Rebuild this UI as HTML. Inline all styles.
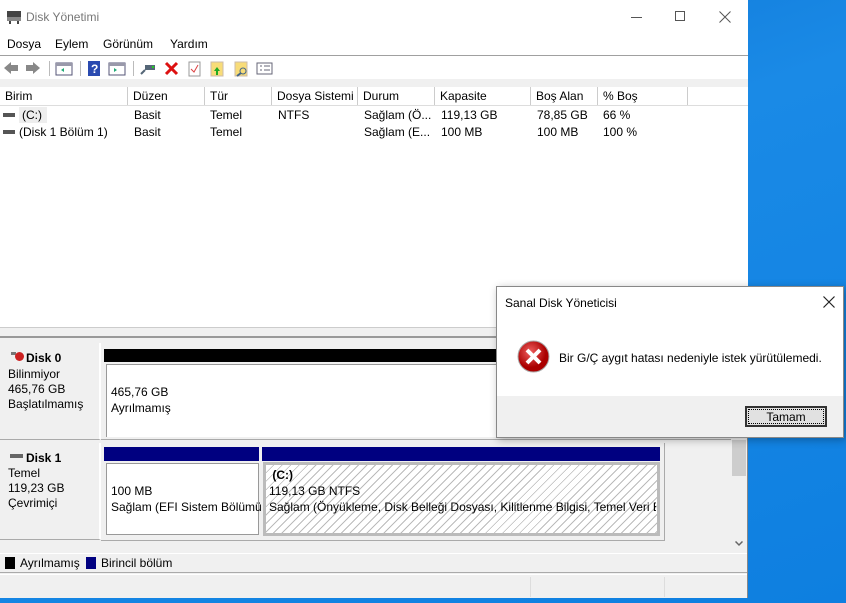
<!DOCTYPE html>
<html><head><meta charset="utf-8"><style>
*{margin:0;padding:0;box-sizing:border-box}
body{width:846px;height:603px;overflow:hidden;position:relative;font-family:"Liberation Sans","DejaVu Sans",sans-serif;font-size:12px;color:#000;background:linear-gradient(160deg,#0a6fd0 0%,#1a8ae6 40%,#0e7fe0 100%)}
.a{position:absolute}
.win{left:0;top:0;width:748px;height:598px;background:#f0f0f0;border-right:1px solid #888}
.t{white-space:nowrap}
.hdr div{position:absolute;top:0;height:18px;border-right:1px solid #ccc;padding:2px 0 0 5px;background:#fff}
</style></head><body>
<div class="a win">
 <div class="a" style="left:0;top:0;width:748px;height:33px;background:#fff"></div>
 <svg class="a" style="left:6px;top:10px" width="16" height="14"><rect x="1" y="1" width="14" height="6" fill="#444"/><rect x="1" y="7" width="14" height="4" fill="#888"/><rect x="3" y="11" width="2" height="3" fill="#444"/><rect x="11" y="11" width="2" height="3" fill="#444"/></svg>
 <div class="a t" style="left:26px;top:10px;color:#777;font-size:12px">Disk Yönetimi</div>
 <div class="a" style="left:631px;top:17px;width:11px;height:1px;background:#555"></div>
 <div class="a" style="left:675px;top:11px;width:10px;height:10px;border:1px solid #555"></div>
 <svg class="a" style="left:719px;top:11px" width="12" height="12"><path d="M0.5 0.5 L11.5 11.5 M11.5 0.5 L0.5 11.5" stroke="#555" stroke-width="1"/></svg>
 <div class="a" style="left:0;top:33px;width:748px;height:22px;background:#fff"></div>
 <div class="a t" style="left:7px;top:37px">Dosya</div>
 <div class="a t" style="left:55px;top:37px">Eylem</div>
 <div class="a t" style="left:103px;top:37px">Görünüm</div>
 <div class="a t" style="left:170px;top:37px">Yardım</div>
 <div class="a" style="left:0;top:55px;width:748px;height:1px;background:#a0a0a0"></div>
 <div class="a" style="left:0;top:56px;width:748px;height:23px;background:#fff"></div>
 <svg class="a" style="left:2px;top:60px" width="280" height="17">
  <path d="M2 8 L9 2 V5 H16 V11 H9 V14Z" fill="#888"/><path d="M38 8 L31 2 V5 H24 V11 H31 V14Z" fill="#888"/>
  <rect x="47" y="1" width="1" height="15" fill="#bbb"/>
  <rect x="54" y="3" width="16" height="12" fill="#fff" stroke="#557"/><rect x="54" y="3" width="16" height="3" fill="#99a"/><path d="M62 8 L59 10 L62 12Z" fill="#2a7"/>
  <rect x="78" y="1" width="1" height="15" fill="#bbb"/>
  <rect x="86" y="1" width="12" height="15" fill="#2a4ab0"/><text x="89" y="13" fill="#fff" font-size="12" font-weight="bold">?</text>
  <rect x="107" y="3" width="16" height="12" fill="#fff" stroke="#557"/><rect x="107" y="3" width="16" height="3" fill="#99a"/><path d="M112 8 L115 10 L112 12Z" fill="#2a7"/>
  <rect x="131" y="1" width="1" height="15" fill="#bbb"/>
  <rect x="143" y="5" width="10" height="5" fill="#567"/><rect x="150" y="6" width="2" height="2" fill="#2c2"/><path d="M143 10 L139 14" stroke="#567" stroke-width="2"/>
  <path d="M164 3 L175 14 M175 3 L164 14" stroke="#d11" stroke-width="3"/>
  <rect x="187" y="2" width="11" height="14" fill="#fff" stroke="#999"/><path d="M189 9 L192 12 L196 5" stroke="#d44" fill="none"/>
  <rect x="209" y="2" width="12" height="14" fill="#f8dc78" stroke="#cba"/><path d="M215 7 L218 11 H216 V15 H214 V11 H212Z" fill="#2a2"/>
  <rect x="233" y="2" width="12" height="14" fill="#f8dc78" stroke="#cba"/><circle cx="241" cy="11" r="3" fill="none" stroke="#468"/><path d="M239 13 L235 16" stroke="#468" stroke-width="2"/>
  <rect x="255" y="3" width="15" height="11" fill="#fff" stroke="#667"/><path d="M258 6 H260 M262 6 H268 M258 10 H260 M262 10 H268" stroke="#667"/>
 </svg>
 <div class="a" style="left:0;top:79px;width:748px;height:8px;background:#f0f0f0"></div>
 <div class="a" style="left:0;top:87px;width:748px;height:240px;background:#fff"></div>
 <div class="a hdr" style="left:0;top:87px;width:748px;height:19px;border-bottom:1px solid #ddd">
  <div style="left:0;width:128px">Birim</div><div style="left:128px;width:77px">Düzen</div><div style="left:205px;width:67px">Tür</div><div style="left:272px;width:86px">Dosya Sistemi</div><div style="left:358px;width:77px">Durum</div><div style="left:435px;width:96px">Kapasite</div><div style="left:531px;width:67px">Boş Alan</div><div style="left:598px;width:90px">% Boş</div><div style="left:688px;width:60px;border:none"></div>
 </div>
 <div class="a" style="left:3px;top:113px;width:12px;height:4px;background:#555"></div>
 <div class="a" style="left:19px;top:107px;width:28px;height:16px;background:#eee"></div>
 <div class="a t" style="left:22px;top:108px">(C:)</div>
 <div class="a" style="left:3px;top:130px;width:12px;height:4px;background:#555"></div>
 <div class="a t" style="left:19px;top:125px">(Disk 1 Bölüm 1)</div>
 <div class="a t" style="left:134px;top:108px">Basit</div><div class="a t" style="left:134px;top:125px">Basit</div>
 <div class="a t" style="left:210px;top:108px">Temel</div><div class="a t" style="left:210px;top:125px">Temel</div>
 <div class="a t" style="left:278px;top:108px">NTFS</div>
 <div class="a t" style="left:364px;top:108px">Sağlam (Ö...</div><div class="a t" style="left:364px;top:125px">Sağlam (E...</div>
 <div class="a t" style="left:441px;top:108px">119,13 GB</div><div class="a t" style="left:441px;top:125px">100 MB</div>
 <div class="a t" style="left:537px;top:108px">78,85 GB</div><div class="a t" style="left:537px;top:125px">100 MB</div>
 <div class="a t" style="left:603px;top:108px">66 %</div><div class="a t" style="left:603px;top:125px">100 %</div>
 <div class="a" style="left:0;top:327px;width:748px;height:1px;background:#ccc"></div>
 <div class="a" style="left:0;top:336px;width:748px;height:2px;background:#999"></div>
 <!-- disk 0 -->
 <div class="a" style="left:0;top:343px;width:101px;height:97px;background:#f0f0f0;border-right:2px solid #fff;border-bottom:1px solid #aaa"></div>
 <div class="a" style="left:11px;top:352px;width:5px;height:3px;background:#777"></div>
 <div class="a" style="left:15px;top:352px;width:9px;height:9px;border-radius:50%;background:#c22"></div>
 <div class="a t" style="left:26px;top:351px;font-weight:bold">Disk 0</div>
 <div class="a t" style="left:8px;top:367px;line-height:15px">Bilinmiyor<br>465,76 GB<br>Başlatılmamış</div>
 <div class="a" style="left:101px;top:343px;width:630px;height:97px;border-bottom:1px solid #aaa"></div>
 <div class="a" style="left:104px;top:349px;width:627px;height:13px;background:#000"></div>
 <div class="a" style="left:106px;top:364px;width:625px;height:73px;background:#fff;border-left:1px solid #999;border-top:1px solid #999"></div>
 <div class="a t" style="left:111px;top:384px;line-height:16px">465,76 GB<br>Ayrılmamış</div>
 <!-- disk 1 -->
 <div class="a" style="left:0;top:443px;width:101px;height:97px;background:#f0f0f0;border-right:2px solid #fff;border-bottom:1px solid #aaa"></div>
 <div class="a" style="left:10px;top:454px;width:13px;height:4px;background:#666"></div>
 <div class="a t" style="left:26px;top:451px;font-weight:bold">Disk 1</div>
 <div class="a t" style="left:8px;top:466px;line-height:15px">Temel<br>119,23 GB<br>Çevrimiçi</div>
 <div class="a" style="left:101px;top:443px;width:564px;height:98px;border-right:1px solid #aaa;border-bottom:1px solid #aaa"></div>
 <div class="a" style="left:104px;top:447px;width:155px;height:14px;background:#000080"></div>
 <div class="a" style="left:262px;top:447px;width:398px;height:14px;background:#000080"></div>
 <div class="a" style="left:106px;top:463px;width:153px;height:72px;background:#fff;border:1px solid #999"></div>
 <div class="a t" style="left:111px;top:483px;line-height:16px">100 MB<br>Sağlam (EFI Sistem Bölümü</div>
 <div class="a" style="left:263px;top:462px;width:397px;height:74px;background:#bbb;padding:3px"><div style="width:100%;height:100%;background:repeating-linear-gradient(135deg,#fff 0 5px,#bbb 5px 6px);"></div></div>
 <div class="a t" style="left:269px;top:467px;line-height:16px;overflow:hidden;width:387px"><b>&nbsp;(C:)</b><br>119,13 GB NTFS<br>Sağlam (Önyükleme, Disk Belleği Dosyası, Kilitlenme Bilgisi, Temel Veri Bölümü)</div>
 <!-- scrollbar -->
 <div class="a" style="left:731px;top:340px;width:16px;height:215px;background:#f0f0f0"></div>
 <div class="a" style="left:732px;top:440px;width:14px;height:36px;background:#cdcdcd"></div>
 <svg class="a" style="left:735px;top:541px" width="8" height="6"><path d="M0.5 0.5 L4 4 L7.5 0.5" stroke="#666" stroke-width="1.5" fill="none"/></svg>
 <div class="a" style="left:0;top:553px;width:747px;height:1px;background:#fff"></div>
 <div class="a" style="left:5px;top:557px;width:10px;height:12px;background:#000"></div>
 <div class="a t" style="left:20px;top:556px">Ayrılmamış</div>
 <div class="a" style="left:86px;top:557px;width:10px;height:12px;background:#000080"></div>
 <div class="a t" style="left:101px;top:556px">Birincil bölüm</div>
 <div class="a" style="left:0;top:572px;width:747px;height:1px;background:#aaa"></div>
 <div class="a" style="left:0;top:574px;width:747px;height:1px;background:#fff"></div>
 <div class="a" style="left:530px;top:577px;width:1px;height:20px;background:#ddd"></div>
 <div class="a" style="left:664px;top:577px;width:1px;height:20px;background:#ddd"></div>
</div>
<!-- dialog -->
<div class="a" style="left:496px;top:286px;width:348px;height:152px;background:#fff;border:1px solid #888;box-shadow:2px 2px 8px rgba(0,0,0,.3)">
 <div class="a t" style="left:8px;top:9px">Sanal Disk Yöneticisi</div>
 <svg class="a" style="left:326px;top:9px" width="12" height="12"><path d="M0.5 0.5 L11.5 11.5 M11.5 0.5 L0.5 11.5" stroke="#222" stroke-width="1.2"/></svg>
 <svg class="a" style="left:20px;top:53px" width="33" height="33"><defs><radialGradient id="g" cx="40%" cy="35%"><stop offset="0" stop-color="#f06060"/><stop offset="1" stop-color="#a00"/></radialGradient></defs><circle cx="16.5" cy="16.5" r="15.5" fill="url(#g)" stroke="#aaa"/><path d="M10 10 L23 23 M23 10 L10 23" stroke="#fff" stroke-width="4"/></svg>
 <div class="a t" style="left:62px;top:64px">Bir G/Ç aygıt hatası nedeniyle istek yürütülemedi.</div>
 <div class="a" style="left:0;top:109px;width:346px;height:41px;background:#f0f0f0"></div>
 <div class="a" style="left:248px;top:119px;width:82px;height:21px;background:#e1e1e1;border:2px solid #333"><div style="position:absolute;left:1px;top:1px;right:1px;bottom:1px;border:1px dotted #000;text-align:center;line-height:14px">Tamam</div></div>
</div>
</body></html>
